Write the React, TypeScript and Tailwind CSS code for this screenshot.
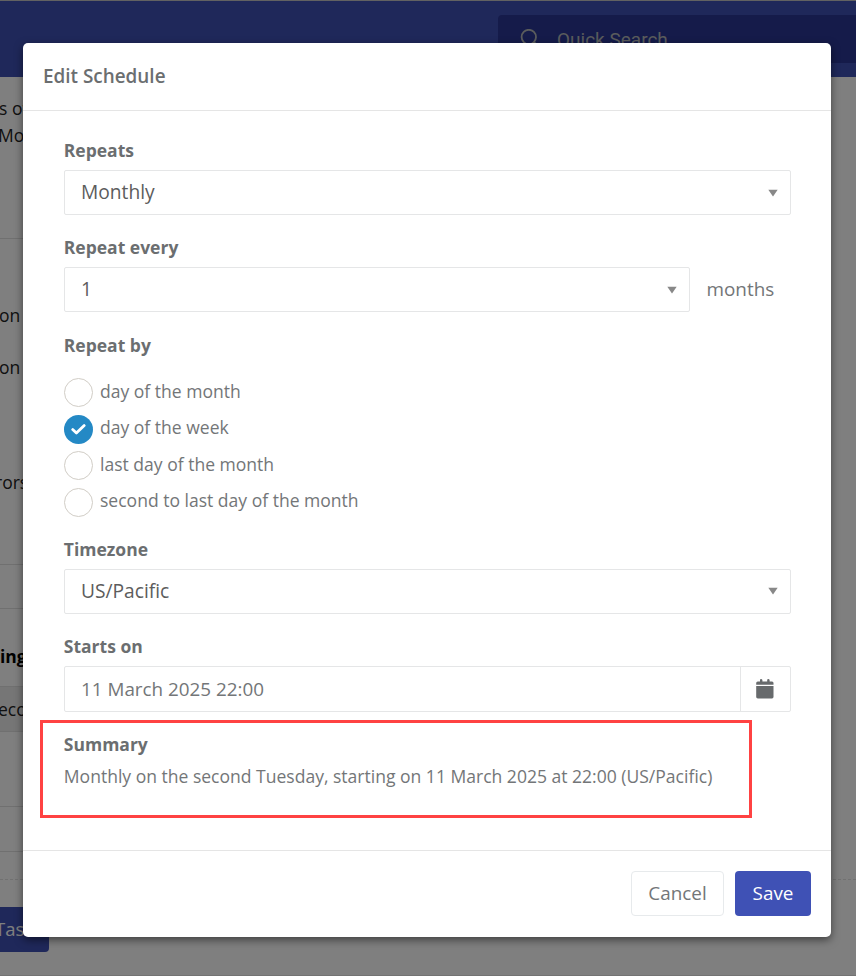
import { useState } from 'react';
import clsx from 'clsx';

const REPEAT_BY = [
  'day of the month',
  'day of the week',
  'last day of the month',
  'second to last day of the month',
];

function Caret() {
  return (
    <svg width="10" height="8" viewBox="0 0 10 8" className="shrink-0">
      <path d="M0.3 0.7H9.7L5 7.5Z" fill="#888888" />
    </svg>
  );
}

function FieldLabel({ children }: { children: string }) {
  return <div className="-ml-[0.2px] h-6 text-[17.5px] leading-6 font-bold text-[#6b6e70]">{children}</div>;
}

function SelectBox({ value, className }: { value: string; className?: string }) {
  return (
    <div
      className={clsx(
        'flex h-[45px] items-center justify-between rounded-[2px] border border-[#e5e6e7] pr-[12.5px] pl-4',
        className
      )}
    >
      <span className="pb-px text-[19.2px] leading-6 text-[#5c5c5c]">{value}</span>
      <Caret />
    </div>
  );
}

function Radio({ label, checked, onSelect }: { label: string; checked: boolean; onSelect: () => void }) {
  return (
    <button type="button" onClick={onSelect} className="flex h-[36.4px] items-center gap-[7px] text-left">
      <span
        className={clsx(
          'flex size-[29px] items-center justify-center rounded-full',
          checked ? 'bg-[#2489c5]' : 'border border-[#d1cdc6]'
        )}
      >
        {checked && (
          <svg width="15" height="11" viewBox="0 0 15 11" fill="none">
            <path d="M1.7 5.6L5.4 9.1L13.2 1.6" stroke="white" strokeWidth="2.8" strokeLinecap="round" strokeLinejoin="round" />
          </svg>
        )}
      </span>
      <span className="-mt-1 text-[17.55px] leading-6 text-[#737678]">{label}</span>
    </button>
  );
}

function CalendarIcon() {
  return (
    <svg width="18" height="20" viewBox="0 0 18 20" fill="#676a6c">
      <path d="M4 1Q4 0 5 0T6.4 1V2.4H11.2V1Q11.2 0 12.3 0T13.6 1V2.4H16Q17.5 2.4 17.5 4V5.7H0.2V4Q0.2 2.4 1.8 2.4H4Z" />
      <path d="M0.2 7H17.5V17.8Q17.5 19.4 16 19.4H1.8Q0.2 19.4 0.2 17.8Z" />
    </svg>
  );
}

// Page that sits behind the modal
function PageBehind() {
  return (
    <div className="flex h-full flex-col border-b border-[#e7e7e7] text-[17.5px] leading-[27px] whitespace-nowrap text-[#222222]">
      <div className="flex h-[77px] shrink-0 items-start justify-end border-t border-[#c4c4c4] bg-[#3f51b5] pt-3.5">
        <div className="flex h-12 w-[358px] items-center gap-4 rounded-l-[4px] bg-[#2a3695] pl-[22px] text-[#b4b8b8]">
          <svg width="21" height="20" viewBox="0 0 21 20" fill="none" stroke="currentColor" strokeWidth="1.8">
            <circle cx="8.8" cy="8" r="7.2" />
            <path d="M13.8 13L19.3 18.5" />
          </svg>
          <span className="font-[Roboto] text-[19px]">Quick Search</span>
        </div>
      </div>
      <div className="h-[162px] w-[200px] shrink-0 border-b border-[#e0e0e0] pt-[18px]">
        <p className="-ml-px">s of</p>
        <p className="-ml-[2px]">Mon</p>
      </div>
      <div className="h-[326px] w-[200px] shrink-0 border-b border-[#e0e0e0] pt-[63px]">
        <p className="-ml-px">on</p>
        <p className="mt-[25px] -ml-px">on</p>
        <p className="mt-[88px] -ml-[5px]">rors</p>
      </div>
      <div className="h-11 w-[200px] shrink-0 border-b border-[#e0e0e0]" />
      <div className="h-[77px] shrink-0 pt-[34px] font-bold text-black">ings</div>
      <div className="h-[46px] w-[200px] shrink-0 border-y border-[#e0e0e0] bg-[#ededed] pt-[9px]">
        <p className="-ml-[2px]">econd</p>
      </div>
      <div className="h-[75px] w-[200px] shrink-0 border-b border-[#e0e0e0]" />
      <div className="h-[45px] w-[200px] shrink-0 border-b border-[#e0e0e0]" />
      <div className="h-[28px] shrink-0 border-b border-dashed border-[#e3e3e3]" />
      <div className="pt-[27px]">
        <div className="flex h-[45px] w-[49px] items-center rounded-r-[4px] bg-[#3f51b5] pb-0.5 text-white">
          <span className="-ml-[5px] text-[18.5px]">Task</span>
        </div>
      </div>
    </div>
  );
}

export default function App() {
  const [repeatBy, setRepeatBy] = useState(1);

  return (
    <div className="relative h-[976px] w-[856px] overflow-hidden bg-white font-['Open_Sans',sans-serif]">
      <PageBehind />

      <div className="absolute inset-0 bg-black/50 pt-[43px] pl-[23px]">
        <div className="relative flex h-[894px] w-[808px] flex-col rounded-[5px] bg-white shadow-[0_3px_9px_rgba(0,0,0,0.5)]">
          <div className="flex h-[68px] shrink-0 items-center border-b border-[#e5e5e5] pb-0.5 pl-5">
            <h1 className="text-[18.9px] leading-6 font-semibold text-[#6b6e70]">Edit Schedule</h1>
          </div>

          <div className="flex-1 px-[41px] pt-[27px]">
            <FieldLabel>Repeats</FieldLabel>
            <SelectBox value="Monthly" className="mt-2 mb-5 w-[727px]" />

            <FieldLabel>Repeat every</FieldLabel>
            <div className="mt-2 mb-[21px] flex items-center gap-[17px]">
              <SelectBox value="1" className="w-[626px]" />
              <span className="-ml-[0.5px] pb-0.5 text-[18.9px] leading-6 text-[#737678]">months</span>
            </div>

            <FieldLabel>Repeat by</FieldLabel>
            <div className="mt-[17.7px] mb-[16.7px] flex flex-col">
              {REPEAT_BY.map((label, i) => (
                <Radio key={label} label={label} checked={repeatBy === i} onSelect={() => setRepeatBy(i)} />
              ))}
            </div>

            <FieldLabel>Timezone</FieldLabel>
            <SelectBox value="US/Pacific" className="mt-2 mb-5 w-[727px]" />

            <FieldLabel>Starts on</FieldLabel>
            <div className="mt-2 mb-5 flex h-[46px] w-[727px] rounded-[2px] border border-[#e5e6e7]">
              <div className="flex flex-1 items-center pl-4 text-[18.85px] leading-6 text-[#737678]">11 March 2025 22:00</div>
              <div className="flex w-[50px] items-center justify-center border-l border-[#e5e6e7] pr-px">
                <CalendarIcon />
              </div>
            </div>

            <FieldLabel>Summary</FieldLabel>
            <p className="mt-2 -ml-[0.2px] text-[17.55px] leading-6 whitespace-nowrap text-[#737678]">
              Monthly on the second Tuesday, starting on 11 March 2025 at 22:00 (US/Pacific)
            </p>
          </div>

          <div className="flex h-[87px] shrink-0 justify-end gap-[11px] border-t border-[#e5e5e5] pt-5 pr-5 text-[18.9px] leading-6">
            <button type="button" className="h-[45px] w-[93px] rounded-[4px] border border-[#e7eaec] pb-px text-[#737678]">
              Cancel
            </button>
            <button type="button" className="h-[45px] w-[76px] rounded-[4px] bg-[#3f51b5] pb-px text-white">
              Save
            </button>
          </div>

          {/* Highlight around the summary */}
          <div className="pointer-events-none absolute top-[677px] left-[17px] h-[98px] w-[712px] border-3 border-[#ff4242]" />
        </div>
      </div>
    </div>
  );
}
